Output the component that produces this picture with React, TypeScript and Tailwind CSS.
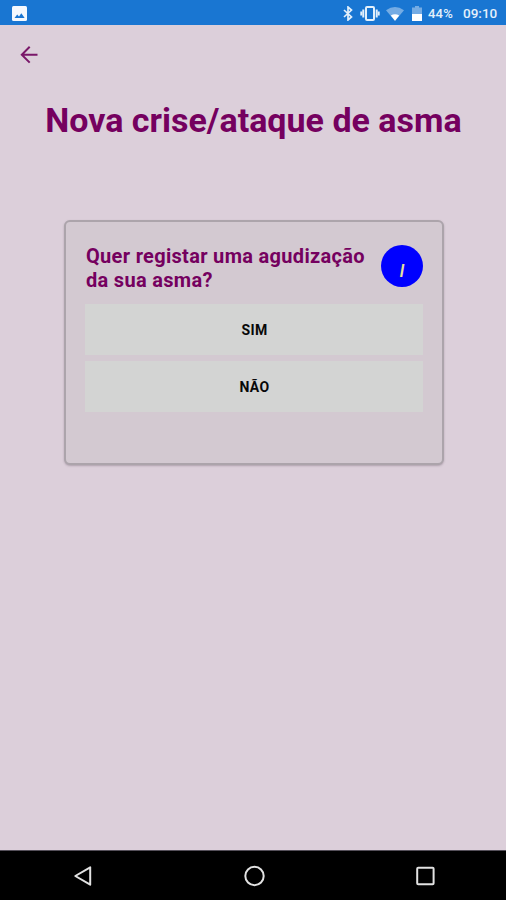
import type { ReactNode } from "react";

const ANSWERS = ["SIM", "NÃO"];

export default function App() {
  return (
    <div className="flex h-[900px] w-[506px] flex-col overflow-hidden bg-[#dccfda] font-[Roboto,sans-serif]">
      <StatusBar />

      <main className="flex-1">
        <button aria-label="Voltar" className="mt-[20px] ml-[20px] block">
          <BackArrow />
        </button>

        <h1 className="mt-[36px] pl-px text-center text-[34px] leading-[40px] font-bold whitespace-nowrap text-[#75005f]">
          Nova crise/ataque de asma
        </h1>

        <section className="mt-[80px] ml-[64px] h-[245px] w-[380px] rounded-[6px] border-2 border-[#aca4ab] bg-[#d3c9d1] px-[19px] pt-[22px] shadow-[0_1px_2px_rgba(90,75,90,0.35)]">
          <div className="flex justify-between">
            <h2 className="pl-px text-[20px] leading-[24px] font-bold tracking-[0.31px] whitespace-nowrap text-[#75005f]">
              Quer registar uma agudização
              <br />
              da sua asma?
            </h2>
            <button className="mt-px flex h-[42px] w-[42px] items-center justify-center rounded-full bg-[#0000ff] pt-[9px] text-[18px] font-medium text-[#e8e29a] italic">
              I
            </button>
          </div>

          <div className="mt-[12px] flex flex-col gap-[6px]">
            {ANSWERS.map((label) => (
              <button
                key={label}
                className="h-[51px] w-full bg-[#d3d4d3] pt-px pl-px text-[14px] font-bold tracking-[0.4px] text-[#080808]"
              >
                {label}
              </button>
            ))}
          </div>
        </section>
      </main>

      <NavBar />
    </div>
  );
}

function StatusBar() {
  return (
    <header className="flex h-[25px] items-center justify-between bg-[#1976d2] pr-[8px] pl-[12px] text-[#e3f0fb]">
      <svg width="15" height="15" viewBox="0 0 15 15" className="mt-[2px]">
        <rect width="15" height="15" rx="1.5" fill="#f4f9fe" />
        <path d="M2.5 12 5.2 8.5l1.8 2L9.3 7.3l3.4 4.7z" fill="#1976d2" />
      </svg>
      <div className="flex items-center pt-[2px] text-[12.5px] leading-none font-medium">
        {/* Bluetooth */}
        <svg width="10" height="15" viewBox="0 0 10 15" fill="none">
          <path
            d="M1 4l7.5 7L5 14V1l3.5 3L1 11"
            stroke="currentColor"
            strokeWidth="1.7"
          />
        </svg>
        {/* Vibrate */}
        <svg width="20" height="15" viewBox="0 0 20 15" className="ml-[7px]" fill="none" stroke="currentColor">
          <rect x="6" y="1" width="8" height="13" rx="1" strokeWidth="2" />
          <path d="M3.3 3.5v8M16.7 3.5v8" strokeWidth="2" />
          <path d="M1.3 5.5v4M18.7 5.5v4" strokeWidth="2" />
        </svg>
        {/* Wi-Fi */}
        <svg width="18" height="14" viewBox="0 0 18 14" className="ml-[6px]">
          <path d="M0 3.3Q9-3.3 18 3.3L9 14z" fill="#fff" opacity=".4" />
          <path d="M4.8 8.6Q9 5.9 13.2 8.6L9 13.7z" fill="#fff" />
        </svg>
        {/* Battery */}
        <svg width="10" height="15" viewBox="0 0 10 15" className="ml-[8px]">
          <path d="M3 0h4v1.5h3V15H0V1.5h3z" fill="#fff" opacity=".4" />
          <path d="M0 8h10v7H0z" fill="#fff" />
        </svg>
        <span className="ml-[6px] w-[26px] text-[13px] tracking-[0.2px] whitespace-nowrap">44%</span>
        <span className="ml-[9px] w-[35px] text-[13.5px] whitespace-nowrap">09:10</span>
      </div>
    </header>
  );
}

function BackArrow() {
  return (
    <svg width="18" height="19" viewBox="0 0 18 19" fill="none" stroke="#7a1769" strokeWidth="2">
      <path d="M17.5 9.7H2M9.7 1.8 1.8 9.7l7.9 7.9" />
    </svg>
  );
}

function NavBar() {
  return (
    <nav className="flex h-[50px] items-center justify-between border-t border-[#55505a] bg-black pr-[70px] pl-[73px]">
      <NavIcon>
        <path d="M17.2 2.3v17.4L2.3 11z" />
      </NavIcon>
      <NavIcon>
        <circle cx="10.5" cy="11" r="9.2" />
      </NavIcon>
      <NavIcon>
        <rect x="3.2" y="2.8" width="16.4" height="16.4" rx="1" />
      </NavIcon>
    </nav>
  );
}

function NavIcon({ children }: { children: ReactNode }) {
  return (
    <button>
      <svg width="22" height="22" viewBox="0 0 22 22" fill="none" stroke="#e2e2e2" strokeWidth="2" strokeLinejoin="round">
        {children}
      </svg>
    </button>
  );
}
